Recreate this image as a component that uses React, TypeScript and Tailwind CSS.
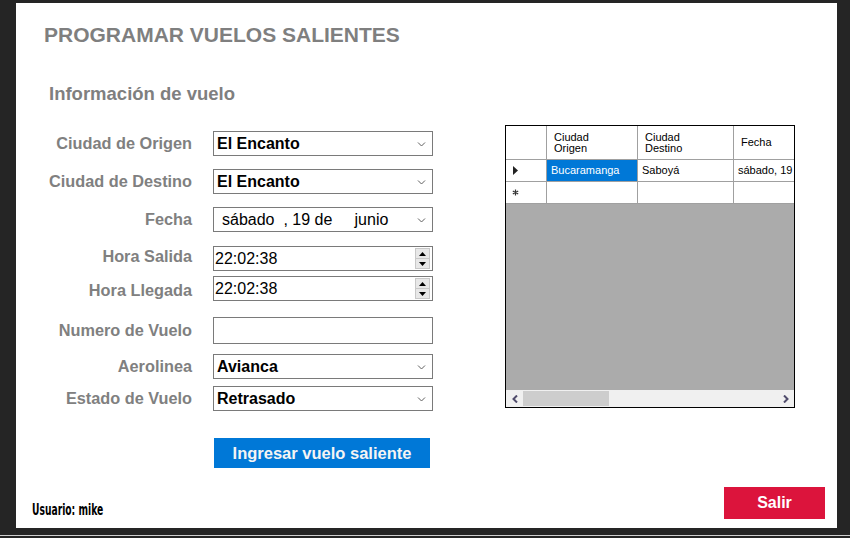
import type { ReactNode } from 'react';

const labelCls =
  "w-[176px] shrink-0 text-right text-[16.3px] font-bold text-[#808080] font-['Liberation_Sans',Arial,sans-serif] whitespace-nowrap";

function Chevron() {
  return (
    <svg width="9" height="6" viewBox="0 0 9 6" className="shrink-0">
      <path d="M1 1.5l3.5 3.5 3.5-3.5" fill="none" stroke="#606060" strokeWidth="1" />
    </svg>
  );
}

function Combo({ value }: { value: string }) {
  return (
    <div className="w-[220px] h-[25px] border border-[#7a7a7a] bg-white flex items-center pl-[3px] pr-[6px]">
      <span className="flex-1 text-[16px] font-bold text-black leading-none">{value}</span>
      <Chevron />
    </div>
  );
}

function TimeBox({ value }: { value: string }) {
  return (
    <div className="w-[220px] h-[25px] border border-[#7a7a7a] bg-white flex items-center pl-[1px] pr-[2px]">
      <span className="flex-1 text-[16px] text-black leading-none">{value}</span>
      <div className="w-[15px] h-[21px] flex flex-col border border-[#c8c8c8] bg-[#e8e8e8]">
        <div className="flex-1 flex items-center justify-center border-b border-[#c8c8c8]">
          <svg width="7" height="4" viewBox="0 0 7 4"><path d="M0 4L3.5 0 7 4z" fill="#000" /></svg>
        </div>
        <div className="flex-1 flex items-center justify-center">
          <svg width="7" height="4" viewBox="0 0 7 4"><path d="M0 0h7L3.5 4z" fill="#000" /></svg>
        </div>
      </div>
    </div>
  );
}

function Row({ label, top, labelShift = '', children }: { label: string; top: string; labelShift?: string; children: ReactNode }) {
  return (
    <div className={`flex items-center ${top}`}>
      <div className={`${labelCls} ${labelShift}`}>{label}</div>
      <div className="ml-[21px]">{children}</div>
    </div>
  );
}

const cell = 'shrink-0 border-r border-b border-[#a0a0a0] px-[4px] flex items-center';

export default function App() {
  return (
    <div className="w-[850px] h-[538px] bg-[#252525] flex flex-col font-['Liberation_Sans',Arial,sans-serif] overflow-hidden">
      <div className="ml-[16px] mt-[3px] w-[821px] h-[525px] bg-white flex flex-col">
        <h1 className="ml-[28px] mt-[20px] text-[21px] leading-[24px] font-bold text-[#7f7f7f]">
          PROGRAMAR VUELOS SALIENTES
        </h1>

        <div className="flex">
          {/* form */}
          <div className="flex flex-col w-[460px]">
            <h2 className="ml-[33px] mt-[36px] text-[18.5px] leading-[22px] font-bold text-[#7f7f7f]">
              Información de vuelo
            </h2>
            <Row label="Ciudad de Origen" top="mt-[26px]">
              <Combo value="El Encanto" />
            </Row>
            <Row label="Ciudad de Destino" top="mt-[13px]">
              <Combo value="El Encanto" />
            </Row>
            <Row label="Fecha" top="mt-[13px]">
              <div className="w-[220px] h-[25px] border border-[#7a7a7a] bg-white flex items-center pr-[6px]">
                <span className="flex-1 text-[16px] text-black leading-none whitespace-pre pl-[8px]">
                  sábado  , 19 de     junio
                </span>
                <Chevron />
              </div>
            </Row>
            <Row label="Hora Salida" top="mt-[14px]" labelShift="-translate-y-[2px]">
              <TimeBox value="22:02:38" />
            </Row>
            <Row label="Hora Llegada" top="mt-[5px]" labelShift="translate-y-[2px]">
              <TimeBox value="22:02:38" />
            </Row>
            <Row label="Numero de Vuelo" top="mt-[16px]">
              <div className="w-[220px] h-[27px] border border-[#7a7a7a] bg-white" />
            </Row>
            <Row label="Aerolinea" top="mt-[10px]">
              <Combo value="Avianca" />
            </Row>
            <Row label="Estado de Vuelo" top="mt-[7px]">
              <Combo value="Retrasado" />
            </Row>
            <div className="ml-[198px] mt-[27px] w-[216px] h-[30px] bg-[#0078d7] flex items-center justify-center text-[16.5px] font-bold text-[#f4f4f4]">
              Ingresar vuelo saliente
            </div>
          </div>

          {/* grid */}
          <div className="ml-[29px] mt-[78px] w-[290px] h-[283px] border border-black bg-[#ababab] flex flex-col overflow-hidden text-[11px] text-black">
            <div className="flex h-[34px] bg-white shrink-0">
              <div className={`${cell} w-[41px]`} />
              <div className={`${cell} w-[91px] leading-[11px] pl-[7px]`}>
                Ciudad<br />Origen
              </div>
              <div className={`${cell} w-[96px] leading-[11px] pl-[7px]`}>
                Ciudad<br />Destino
              </div>
              <div className={`${cell} w-[70px] pl-[7px]`}>Fecha</div>
            </div>
            <div className="flex h-[22px] bg-white shrink-0">
              <div className={`${cell} w-[41px] pl-[7px]`}>
                <svg width="5" height="9" viewBox="0 0 5 9"><path d="M0 0l5 4.5L0 9z" fill="#222" /></svg>
              </div>
              <div className={`${cell} w-[91px] bg-[#0078d7] text-white`}>Bucaramanga</div>
              <div className={`${cell} w-[96px]`}>Saboyá</div>
              <div className={`${cell} w-[70px] whitespace-nowrap overflow-hidden`}>sábado, 19</div>
            </div>
            <div className="flex h-[22px] bg-white shrink-0">
              <div className={`${cell} w-[41px] pl-[6px]`}>
                <svg width="7" height="7" viewBox="0 0 7 7">
                  <path d="M3.5 0.5v6M0.8 2l5.4 3M0.8 5l5.4-3" stroke="#333" strokeWidth="1.2" />
                </svg>
              </div>
              <div className={`${cell} w-[91px]`} />
              <div className={`${cell} w-[96px]`} />
              <div className={`${cell} w-[70px]`} />
            </div>
            <div className="flex-1" />
            <div className="h-[17px] bg-[#f0f0f0] flex items-center shrink-0">
              <div className="w-[17px] flex items-center justify-center">
                <svg width="6" height="8" viewBox="0 0 6 8"><path d="M5 0.5L1.5 4 5 7.5" fill="none" stroke="#4f4b6b" strokeWidth="2" /></svg>
              </div>
              <div className="w-[86px] h-[15px] bg-[#cdcdcd]" />
              <div className="flex-1" />
              <div className="w-[17px] flex items-center justify-center">
                <svg width="6" height="8" viewBox="0 0 6 8"><path d="M1 0.5L4.5 4 1 7.5" fill="none" stroke="#4f4b6b" strokeWidth="2" /></svg>
              </div>
            </div>
          </div>
        </div>

        <div className="flex items-end mt-auto mb-[9px]">
          <span className="ml-[16px] mb-[1px] inline-block origin-left scale-x-[0.68] text-[15px] leading-[16px] font-bold text-black font-['DejaVu_Sans_Condensed','DejaVu_Sans',sans-serif] whitespace-nowrap">
            Usuario: mike
          </span>
          <div className="ml-auto mr-[12px] w-[101px] h-[32px] bg-[#dc143c] flex items-center justify-center text-[16px] font-bold text-white">
            Salir
          </div>
        </div>
      </div>
      <div className="mt-[7px] h-px bg-[#cfcfcf]" />
    </div>
  );
}
